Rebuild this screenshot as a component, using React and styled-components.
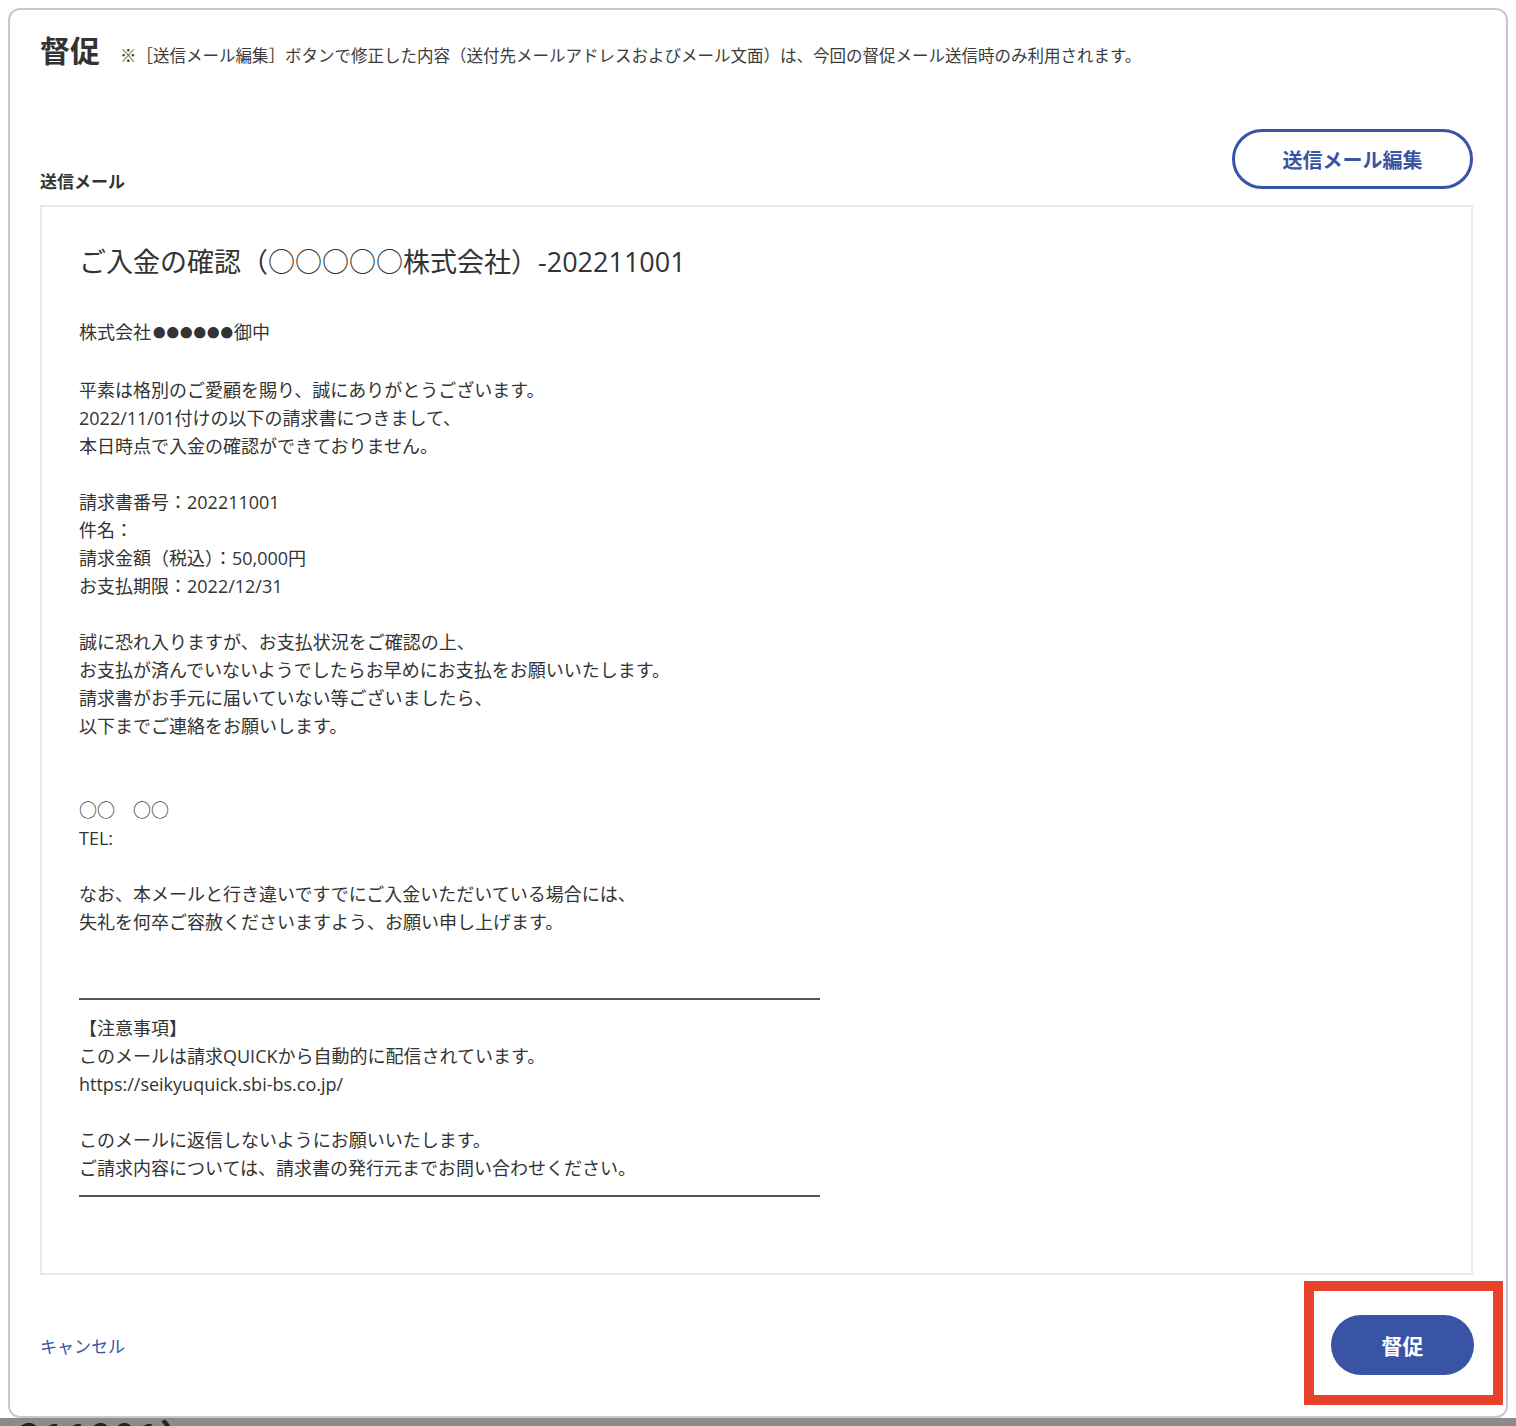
import React from 'react';
import styled, { createGlobalStyle } from 'styled-components';

const GlobalStyle = createGlobalStyle`
  body {
    margin: 0;
    background: #fff;
    font-family: 'Noto Sans CJK JP', 'Noto Sans', sans-serif;
    color: #333;
  }
`;

const Page = styled.div`
  width: 1516px;
  height: 1426px;
  overflow: hidden;
  padding: 8px 8px 0;
  box-sizing: border-box;
  background: #fff;
`;

const Card = styled.div`
  height: 1410px;
  box-sizing: border-box;
  border: 2px solid #c9c9c9;
  border-radius: 12px;
  padding: 18px 33px 10px 30px;
  display: flex;
  flex-direction: column;
  background: #fff;
`;

const Header = styled.div`
  display: flex;
  align-items: baseline;
  gap: 20px;
  margin-bottom: 59px;
`;

const Title = styled.h1`
  margin: 0;
  font-size: 30px;
  line-height: 42px;
  font-weight: 700;
  color: #333;
`;

const Note = styled.span`
  font-size: 16.5px;
  color: #3c3c3c;
`;

const Toolbar = styled.div`
  display: flex;
  justify-content: space-between;
  align-items: flex-end;
  margin-bottom: 16px;
`;

const Label = styled.div`
  font-size: 17px;
  line-height: 17px;
  font-weight: 700;
  color: #333;
`;

const OutlineButton = styled.button`
  width: 241px;
  height: 60px;
  border: 3px solid #3953a5;
  border-radius: 30px;
  background: #fff;
  color: #3953a5;
  font-family: inherit;
  font-size: 20px;
  font-weight: 700;
  cursor: pointer;
`;

const MailBox = styled.div`
  border: 2px solid #e7e9ed;
  padding: 36px 37px 76px;
  font-family: 'Open Sans', 'Noto Sans CJK JP', sans-serif;
`;

const Subject = styled.div`
  font-size: 27px;
  line-height: 38px;
  color: #333;
  margin-bottom: 37px;
`;

const Line = styled.div`
  font-size: 18px;
  line-height: 28px;
  min-height: 28px;
  color: #333;
  white-space: pre;
`;

const Dots = styled.span`
  font-size: 12.5px;
  letter-spacing: 1px;
  vertical-align: 1px;
  margin-left: 2px;
`;

const Rule = styled.div`
  width: 741px;
  border-top: 2px solid #555;
  margin-top: ${(p) => p.$top}px;
  margin-bottom: ${(p) => p.$bottom}px;
`;

const Footer = styled.div`
  display: flex;
  justify-content: space-between;
  align-items: center;
  margin-top: 6px;
  margin-right: -30px;
`;

const CancelLink = styled.a`
  font-size: 17px;
  color: #3953a5;
  cursor: pointer;
  margin-top: 4px;
`;

const Highlight = styled.div`
  border: 10px solid #e8412c;
  padding: 24px 19px 20px 17px;
`;

const PrimaryButton = styled.button`
  width: 143px;
  height: 60px;
  border: none;
  border-radius: 30px;
  background: #3953a5;
  color: #fff;
  font-family: inherit;
  font-size: 21px;
  font-weight: 700;
  cursor: pointer;
`;

const BehindStrip = styled.div`
  height: 10px;
  margin: 0 -8px;
  background: #8b8b8b;
  overflow: hidden;
  padding-left: 18px;
  font-size: 40px;
  font-weight: 700;
  line-height: 10px;
  color: #222;
  & span {
    display: inline-block;
    transform: translateY(14px);
  }
`;

const BODY = [
  '',
  '平素は格別のご愛顧を賜り、誠にありがとうございます。',
  '2022/11/01付けの以下の請求書につきまして、',
  '本日時点で入金の確認ができておりません。',
  '',
  '請求書番号：202211001',
  '件名：',
  '請求金額（税込）：50,000円',
  'お支払期限：2022/12/31',
  '',
  '誠に恐れ入りますが、お支払状況をご確認の上、',
  'お支払が済んでいないようでしたらお早めにお支払をお願いいたします。',
  '請求書がお手元に届いていない等ございましたら、',
  '以下までご連絡をお願いします。',
  '',
  '',
  '○○　○○',
  'TEL:',
  '',
  'なお、本メールと行き違いですでにご入金いただいている場合には、',
  '失礼を何卒ご容赦くださいますよう、お願い申し上げます。',
];

const NOTICE = [
  '【注意事項】',
  'このメールは請求QUICKから自動的に配信されています。',
  'https://seikyuquick.sbi-bs.co.jp/',
  '',
  'このメールに返信しないようにお願いいたします。',
  'ご請求内容については、請求書の発行元までお問い合わせください。',
];

export default function App() {
  return (
    <Page>
      <GlobalStyle />
      <Card>
        <Header>
          <Title>督促</Title>
          <Note>※［送信メール編集］ボタンで修正した内容（送付先メールアドレスおよびメール文面）は、今回の督促メール送信時のみ利用されます。</Note>
        </Header>
        <Toolbar>
          <Label>送信メール</Label>
          <OutlineButton>送信メール編集</OutlineButton>
        </Toolbar>
        <MailBox>
          <Subject>ご入金の確認（○○○○○株式会社）-202211001</Subject>
          <Line>
            株式会社<Dots>●●●●●●</Dots>御中
          </Line>
          {BODY.map((text, i) => (
            <Line key={'b' + i}>{text}</Line>
          ))}
          <Rule $top={62} $bottom={14} />
          {NOTICE.map((text, i) => (
            <Line key={'n' + i}>{text}</Line>
          ))}
          <Rule $top={13} $bottom={0} />
        </MailBox>
        <Footer>
          <CancelLink>キャンセル</CancelLink>
          <Highlight>
            <PrimaryButton>督促</PrimaryButton>
          </Highlight>
        </Footer>
      </Card>
      <BehindStrip>
        <span>211001）</span>
      </BehindStrip>
    </Page>
  );
}
